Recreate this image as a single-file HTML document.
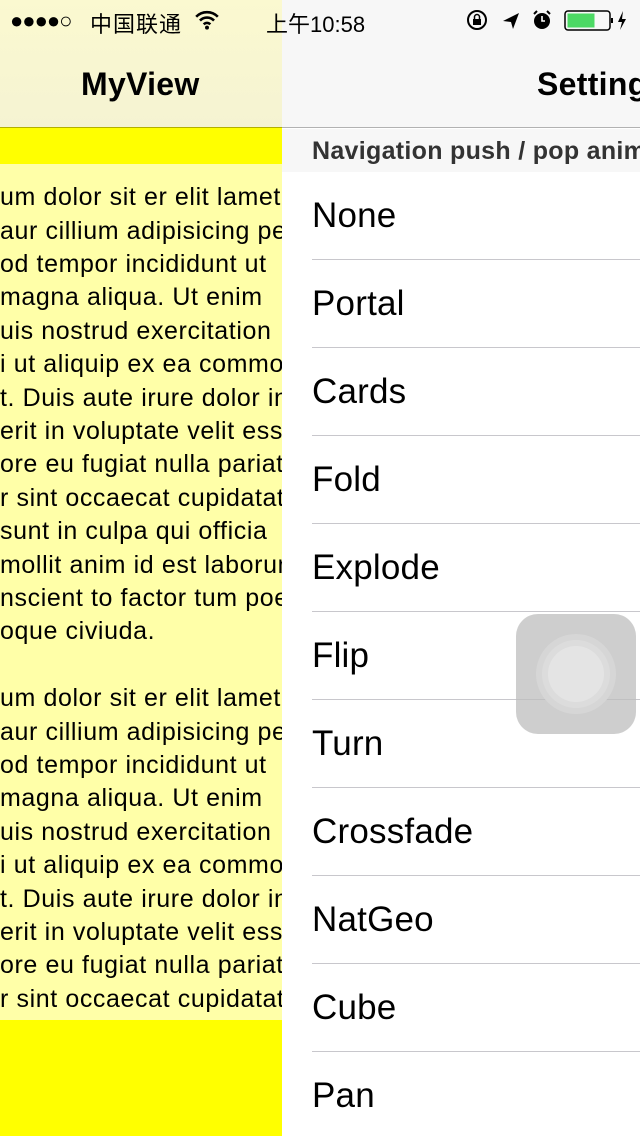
<!DOCTYPE html>
<html><head><meta charset="utf-8"><style>
*{margin:0;padding:0;box-sizing:border-box}
body{width:640px;height:1136px;overflow:hidden;position:relative;background:#fff;font-family:"Liberation Sans","Noto Sans CJK SC",sans-serif;color:#000}
.right{position:absolute;left:282px;top:0;width:358px;height:1136px;background:#fff}
.rtop{position:absolute;left:0;top:0;width:358px;height:128px;background:#f7f7f7;border-bottom:1px solid #b2b2b2}
.sect{position:absolute;left:0;top:129px;width:358px;height:43px;background:#f7f7f7;font-size:25px;font-weight:bold;color:#333;padding-left:30px;line-height:45px;white-space:nowrap;overflow:hidden;letter-spacing:0.3px}
.row{position:absolute;left:30px;width:328px;height:88px;border-bottom:1px solid #c8c7cc;font-size:35px;line-height:88px;white-space:nowrap;letter-spacing:0.2px}
.left{position:absolute;left:0;top:0;width:282px;height:1136px;overflow:hidden;background:#ff0}
.ltop{position:absolute;left:0;top:0;width:282px;height:128px;background:linear-gradient(#fbf9d0,#f5f3d2);border-bottom:1px solid #b3b000}
.lbody{position:absolute;left:0;top:164px;width:282px;height:856px;background:#ffffa8}
.ln{position:absolute;left:0;font-size:25px;white-space:nowrap;line-height:28px;letter-spacing:0.6px}
.title{position:absolute;font-size:32px;font-weight:bold;top:66px;white-space:nowrap;letter-spacing:0.3px}
.sb{position:absolute;top:8px;font-size:21px;white-space:nowrap}
</style></head><body>
<div class="right">
 <div class="rtop"></div>
 <div class="title" style="left:255px">Settings</div>
 <div class="sect">Navigation push / pop animation</div>
 <div class="row" style="top:172px">None</div>
 <div class="row" style="top:260px">Portal</div>
 <div class="row" style="top:348px">Cards</div>
 <div class="row" style="top:436px">Fold</div>
 <div class="row" style="top:524px">Explode</div>
 <div class="row" style="top:612px">Flip</div>
 <div class="row" style="top:700px">Turn</div>
 <div class="row" style="top:788px">Crossfade</div>
 <div class="row" style="top:876px">NatGeo</div>
 <div class="row" style="top:964px">Cube</div>
 <div class="row" style="top:1052px;border-bottom:none">Pan</div>
 <div style="position:absolute;left:234px;top:614px;width:120px;height:120px;border-radius:22px;background:rgba(190,190,190,0.75)">
  <div style="position:absolute;left:20px;top:20px;width:80px;height:80px;border-radius:50%;background:#d6d6d6"></div>
  <div style="position:absolute;left:26px;top:26px;width:68px;height:68px;border-radius:50%;background:#dcdcdc"></div>
  <div style="position:absolute;left:32px;top:32px;width:56px;height:56px;border-radius:50%;background:#e4e4e4"></div>
 </div>
</div>
<div class="left">
 <div class="ltop"></div>
 <div class="lbody"></div>
 <div class="title" style="left:81px">MyView</div>
 <div class="ln" style="top:183px">um dolor sit er elit lamet</div>
 <div class="ln" style="top:217px">aur cillium adipisicing pecu</div>
 <div class="ln" style="top:250px">od tempor incididunt ut</div>
 <div class="ln" style="top:283px">magna aliqua. Ut enim</div>
 <div class="ln" style="top:317px">uis nostrud exercitation</div>
 <div class="ln" style="top:350px">i ut aliquip ex ea commodo</div>
 <div class="ln" style="top:384px">t. Duis aute irure dolor in</div>
 <div class="ln" style="top:417px">erit in voluptate velit esse</div>
 <div class="ln" style="top:450px">ore eu fugiat nulla pariatur</div>
 <div class="ln" style="top:484px">r sint occaecat cupidatat</div>
 <div class="ln" style="top:517px">sunt in culpa qui officia</div>
 <div class="ln" style="top:551px">mollit anim id est laborum</div>
 <div class="ln" style="top:584px">nscient to factor tum poen</div>
 <div class="ln" style="top:617px">oque civiuda.</div>
 <div class="ln" style="top:684px">um dolor sit er elit lamet</div>
 <div class="ln" style="top:718px">aur cillium adipisicing pecu</div>
 <div class="ln" style="top:751px">od tempor incididunt ut</div>
 <div class="ln" style="top:784px">magna aliqua. Ut enim</div>
 <div class="ln" style="top:818px">uis nostrud exercitation</div>
 <div class="ln" style="top:851px">i ut aliquip ex ea commodo</div>
 <div class="ln" style="top:885px">t. Duis aute irure dolor in</div>
 <div class="ln" style="top:918px">erit in voluptate velit esse</div>
 <div class="ln" style="top:951px">ore eu fugiat nulla pariatur</div>
 <div class="ln" style="top:985px">r sint occaecat cupidatat</div>
</div>
<div class="sb" style="left:10px;font-size:22px;top:8px;letter-spacing:-1px">●●●●○</div>
<div class="sb" style="left:90px;font-size:22px;top:7px;letter-spacing:1px">中国联通</div>
<svg style="position:absolute;left:194px;top:9px" width="26" height="22" viewBox="0 0 24 20"><path d="M2 7a14 14 0 0 1 20 0M5.5 10.5a9 9 0 0 1 13 0M9 14a4 4 0 0 1 6 0" stroke="#000" stroke-width="2.4" fill="none"/><circle cx="12" cy="17" r="1.8"/></svg>
<div class="sb" style="left:266px;top:7px;font-size:22px">上午10:58</div>
<svg style="position:absolute;left:465px;top:8px" width="170" height="24" viewBox="0 0 170 24">
 <circle cx="12" cy="12" r="9" fill="none" stroke="#000" stroke-width="2"/><rect x="8" y="11" width="8" height="6" fill="#000"/><path d="M9.5 11v-2a2.5 2.5 0 0 1 5 0v2" fill="none" stroke="#000" stroke-width="1.5"/>
 <path d="M38 13l16-8-6 16-2-7z" fill="#000"/>
 <circle cx="77" cy="13" r="8" fill="#000"/><path d="M77 8v5h3" stroke="#fff" stroke-width="1.6" fill="none"/><path d="M69 6l3-3M85 6l-3-3" stroke="#000" stroke-width="2"/>
 <rect x="100" y="3" width="45" height="19" rx="3" fill="none" stroke="#000" stroke-width="1.5"/><rect x="102.5" y="5.5" width="27" height="14" fill="#4cd964"/><rect x="146" y="10" width="2" height="5" fill="#000"/>
 <path d="M158 3l-5 11h4l-2 8 6-11h-4z" fill="#000"/>
</svg>
</body></html>
